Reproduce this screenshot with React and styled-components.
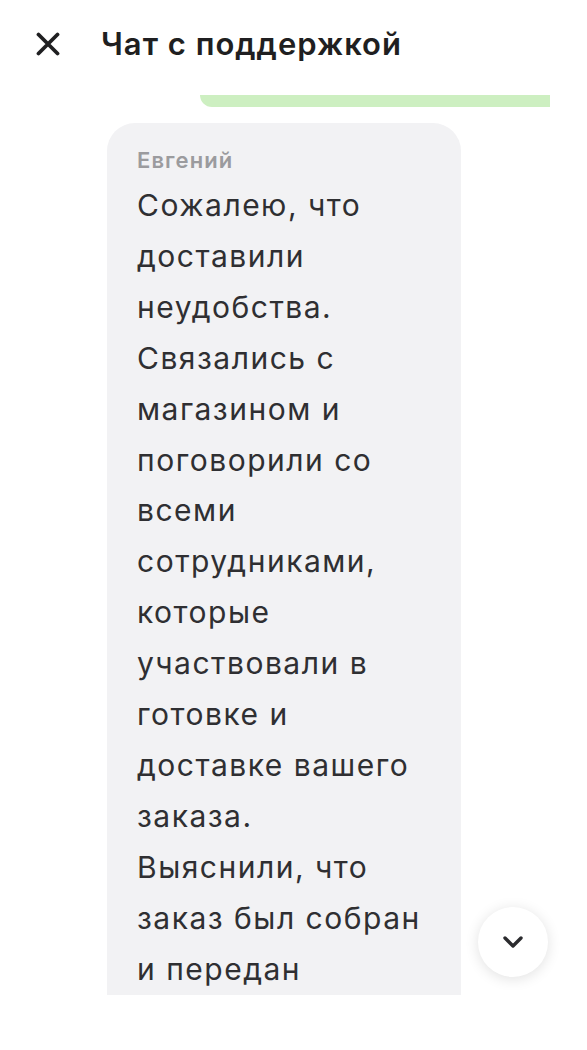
import React from 'react';
import styled, { createGlobalStyle } from 'styled-components';

const GlobalStyle = createGlobalStyle`
    html, body {
        margin: 0;
        padding: 0;
        background: #ffffff;
    }
    body {
        font-family: Inter, "Noto Sans", sans-serif;
        color: #2b2b2e;
    }
`;

const Screen = styled.div`
    width: 587px;
    height: 1050px;
    display: flex;
    flex-direction: column;
    background: #ffffff;
    overflow: hidden;
`;

const Header = styled.header`
    height: 89px;
    flex: none;
    display: flex;
    align-items: center;
    padding: 0 0 2px 35px;
    gap: 40px;
    box-sizing: border-box;
`;

const CloseButton = styled.button`
    width: 26px;
    height: 26px;
    padding: 0;
    border: none;
    background: none;
    display: flex;
    align-items: center;
    justify-content: center;
    color: #1f1f21;
`;

const Title = styled.h1`
    margin: 0;
    font-size: 31px;
    font-weight: 600;
    letter-spacing: 1px;
    color: #1f1f21;
`;

// visible part of the chat, cut just above the input area
const Feed = styled.div`
    position: relative;
    height: 906px;
    flex: none;
    overflow: hidden;
    display: flex;
    flex-direction: column;
    gap: 16px;
`;

const OwnTail = styled.div`
    flex: none;
    align-self: flex-end;
    margin-top: 6px;
    margin-right: 37px;
    width: 350px;
    height: 12px;
    background: #cdefc1;
    border-radius: 0 0 0 16px;
`;

const Bubble = styled.div`
    flex: none;
    margin-left: 107px;
    width: 354px;
    box-sizing: border-box;
    padding: 23px 12px 40px 30px;
    background: #f2f2f4;
    border-radius: 28px;
`;

const Author = styled.div`
    font-size: 22px;
    font-weight: 600;
    letter-spacing: 1.1px;
    color: #9b9b9e;
    line-height: 28px;
    margin-bottom: 6px;
`;

const Text = styled.div`
    font-size: 30px;
    line-height: 50.9px;
    letter-spacing: 1.5px;
    color: #2f2f32;
    white-space: pre-line;
`;

const ScrollDown = styled.button`
    position: absolute;
    right: 39px;
    bottom: 18px;
    width: 70px;
    height: 70px;
    border-radius: 50%;
    border: none;
    background: #ffffff;
    box-shadow: 0 2px 14px rgba(0, 0, 0, 0.12);
    display: flex;
    align-items: center;
    justify-content: center;
    color: #2b2b2e;
`;

const lines = [
    'Сожалею, что',
    'доставили',
    'неудобства.',
    'Связались с',
    'магазином и',
    'поговорили со',
    'всеми',
    'сотрудниками,',
    'которые',
    'участвовали в',
    'готовке и',
    'доставке вашего',
    'заказа.',
    'Выяснили, что',
    'заказ был собран',
    'и передан',
];

export default function App() {
    return (
        <Screen>
            <GlobalStyle />
            <Header>
                <CloseButton aria-label="Закрыть">
                    <svg width="24" height="24" viewBox="0 0 24 24">
                        <path d="M2.5 2.5 L21.5 21.5 M21.5 2.5 L2.5 21.5" stroke="currentColor" strokeWidth="3.8" strokeLinecap="round" />
                    </svg>
                </CloseButton>
                <Title>Чат с поддержкой</Title>
            </Header>
            <Feed>
                <OwnTail />
                <Bubble>
                    <Author>Евгений</Author>
                    <Text>{lines.join('\n')}</Text>
                </Bubble>
                <ScrollDown aria-label="Вниз">
                    <svg width="22" height="14" viewBox="0 0 22 14">
                        <path d="M3 3 L11 11 L19 3" fill="none" stroke="currentColor" strokeWidth="3.4" strokeLinecap="round" strokeLinejoin="round" />
                    </svg>
                </ScrollDown>
            </Feed>
        </Screen>
    );
}
